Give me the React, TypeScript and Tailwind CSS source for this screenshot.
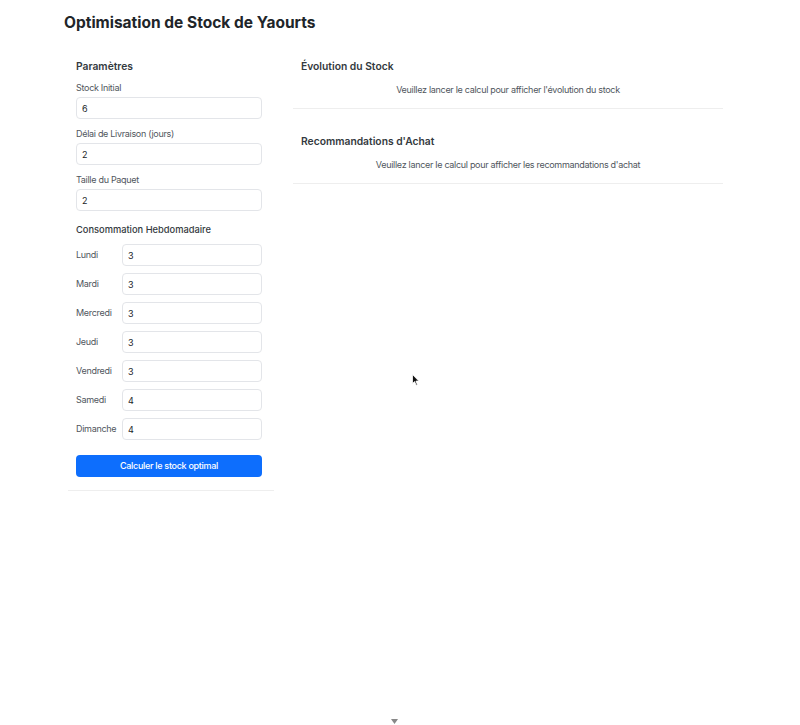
import { useState } from "react";

const days = [
  { name: "Lundi", value: "3" },
  { name: "Mardi", value: "3" },
  { name: "Mercredi", value: "3" },
  { name: "Jeudi", value: "3" },
  { name: "Vendredi", value: "3" },
  { name: "Samedi", value: "4" },
  { name: "Dimanche", value: "4" },
];

const inputCls =
  "h-[22px] w-full rounded-[4px] border border-[#e3e5e9] px-[5px] text-[9px] tracking-[-0.2px] text-[#212529] outline-none";

function Field({ label, value }: { label: string; value: string }) {
  return (
    <div className="flex flex-col">
      <label className="mb-[3px] text-[9px] leading-[12px] tracking-[-0.3px] text-[#50565d]">{label}</label>
      <input defaultValue={value} className={inputCls} />
    </div>
  );
}

export default function App() {
  const [ran] = useState(false);

  return (
    <div className="relative min-h-[725px] bg-white font-['Inter',sans-serif] text-[#212529]">
      <div className="pl-16 pt-2">
        <h1 className="text-[15.5px] leading-[30px] font-bold text-[#212529]">Optimisation de Stock de Yaourts</h1>

        <div className="ml-1 mt-[20px] grid w-[655px] grid-cols-[206px_430px] items-start gap-[19px]">
          {/* Paramètres */}
          <div className="border-b border-[#eeeeee] pl-2 pr-3 pb-[13px]">
            <h2 className="text-[10.3px] leading-4 font-semibold text-[#343a40]">Paramètres</h2>
            <div className="mt-2 flex flex-col gap-[9px]">
              <Field label="Stock Initial" value="6" />
              <Field label="Délai de Livraison (jours)" value="2" />
              <Field label="Taille du Paquet" value="2" />
            </div>

            <h3 className="mt-3 text-[9.3px] leading-[14px] font-medium text-[#343a40]">Consommation Hebdomadaire</h3>
            <div className="mt-[7px] flex flex-col gap-[7px]">
              {days.map((d) => (
                <div key={d.name} className="flex items-center">
                  <span className="w-[46px] shrink-0 text-[9px] tracking-[-0.3px] text-[#50565d]">{d.name}</span>
                  <input defaultValue={d.value} className={inputCls} />
                </div>
              ))}
            </div>

            <button className="mt-[15px] h-[22px] w-full rounded-[4px] bg-[#0d6efd] text-[9px] tracking-[-0.3px] font-medium text-white">
              Calculer le stock optimal
            </button>
          </div>

          {/* Résultats */}
          <div className="flex flex-col gap-6">
            <div className="border-b border-[#eeeeee] px-2 pb-3">
              <h2 className="text-[10.3px] leading-4 font-semibold text-[#343a40]">Évolution du Stock</h2>
              <p className="mt-[10px] text-center text-[9px] leading-[12px] tracking-[-0.3px] text-[#50565d]">
                {ran ? "" : "Veuillez lancer le calcul pour afficher l'évolution du stock"}
              </p>
            </div>
            <div className="border-b border-[#eeeeee] px-2 pb-3">
              <h2 className="text-[10.3px] leading-4 font-semibold text-[#343a40]">Recommandations d'Achat</h2>
              <p className="mt-[10px] text-center text-[9px] leading-[12px] tracking-[-0.3px] text-[#50565d]">
                {ran ? "" : "Veuillez lancer le calcul pour afficher les recommandations d'achat"}
              </p>
            </div>
          </div>
        </div>
      </div>

      {/* mouse cursor */}
      <svg className="absolute left-[412px] top-[374px]" width="8" height="12" viewBox="0 0 8 12">
        <path d="M0.5 0.5 L0.5 9.5 L2.6 7.6 L4.2 11.2 L5.4 10.7 L3.9 7.1 L6.8 7.1 Z" fill="#111" stroke="#fff" strokeWidth="0.8" />
      </svg>

      {/* scroll hint */}
      <svg className="absolute left-[391px] top-[719px]" width="7" height="5" viewBox="0 0 7 5">
        <path d="M0 0 L7 0 L3.5 5 Z" fill="#888" />
      </svg>
    </div>
  );
}
